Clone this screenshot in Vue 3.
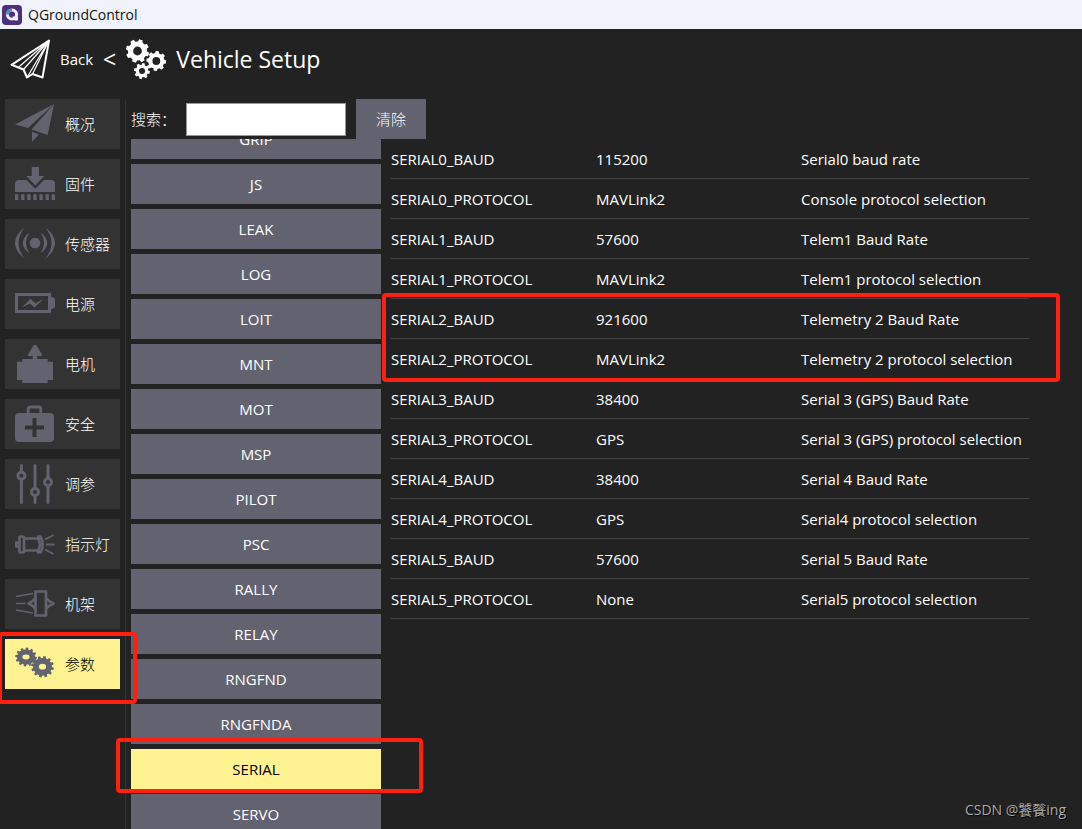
<script setup>
import { ref } from 'vue'

const polar = (cx, cy, rx, ry, a) => `${(cx + rx * Math.cos(a)).toFixed(2)} ${(cy + ry * Math.sin(a)).toFixed(2)}`

// Outline of a gear with a hole, to be filled with the even-odd rule
function gear(cx, cy, rx, ry, teeth, depth, hx, hy, turn = 0) {
  const step = (Math.PI * 2) / teeth
  const points = []
  for (let i = 0; i < teeth; i++) {
    const a = turn + i * step
    points.push(polar(cx, cy, rx - depth, ry - depth, a - step * 0.32))
    points.push(polar(cx, cy, rx, ry, a - step * 0.2))
    points.push(polar(cx, cy, rx, ry, a + step * 0.2))
    points.push(polar(cx, cy, rx - depth, ry - depth, a + step * 0.32))
  }
  const hole = `M${cx - hx} ${cy}a${hx} ${hy} 0 1 0 ${hx * 2} 0a${hx} ${hy} 0 1 0 ${-hx * 2} 0Z`
  return `M${points.join('L')}Z${hole}`
}

const setupGears = [
  gear(11.5, 12, 11.8, 11.8, 8, 2.2, 4.4, 4.4, 0.3),
  gear(30.3, 22, 10, 10, 8, 1.9, 3.9, 3.9, 0.1),
  gear(16, 32, 8, 8, 8, 1.7, 3, 3, 0.2),
]
const paramGears = [
  gear(11, 18, 10.8, 9.4, 12, 1.8, 3.6, 2.4, 0.1),
  gear(27.5, 27.7, 11.4, 10.8, 12, 2, 3.6, 2.9, 0.2),
]

const pages = [
  { id: 'summary', label: '概况' },
  { id: 'firmware', label: '固件' },
  { id: 'sensors', label: '传感器' },
  { id: 'power', label: '电源' },
  { id: 'motors', label: '电机' },
  { id: 'safety', label: '安全' },
  { id: 'tuning', label: '调参' },
  { id: 'lights', label: '指示灯' },
  { id: 'frame', label: '机架' },
  { id: 'params', label: '参数' },
]
const groups = ['GRIP', 'JS', 'LEAK', 'LOG', 'LOIT', 'MNT', 'MOT', 'MSP', 'PILOT', 'PSC', 'RALLY', 'RELAY', 'RNGFND', 'RNGFNDA', 'SERIAL', 'SERVO']
const params = [
  ['SERIAL0_BAUD', '115200', 'Serial0 baud rate'],
  ['SERIAL0_PROTOCOL', 'MAVLink2', 'Console protocol selection'],
  ['SERIAL1_BAUD', '57600', 'Telem1 Baud Rate'],
  ['SERIAL1_PROTOCOL', 'MAVLink2', 'Telem1 protocol selection'],
  ['SERIAL2_BAUD', '921600', 'Telemetry 2 Baud Rate'],
  ['SERIAL2_PROTOCOL', 'MAVLink2', 'Telemetry 2 protocol selection'],
  ['SERIAL3_BAUD', '38400', 'Serial 3 (GPS) Baud Rate'],
  ['SERIAL3_PROTOCOL', 'GPS', 'Serial 3 (GPS) protocol selection'],
  ['SERIAL4_BAUD', '38400', 'Serial 4 Baud Rate'],
  ['SERIAL4_PROTOCOL', 'GPS', 'Serial4 protocol selection'],
  ['SERIAL5_BAUD', '57600', 'Serial 5 Baud Rate'],
  ['SERIAL5_PROTOCOL', 'None', 'Serial5 protocol selection'],
]

const page = ref('params')
const group = ref('SERIAL')
const search = ref('')
</script>

<template>
  <div class="window">
    <div class="titlebar">
      <svg class="logo" viewBox="0 0 20 20" aria-hidden="true">
        <rect width="20" height="20" rx="4" fill="#4d2f7c" />
        <circle cx="10" cy="9.5" r="4.6" fill="none" stroke="#f3eff8" stroke-width="3" />
        <path d="M3.9 9.5A6.1 6.1 0 0 1 10 3.4V6.4A3.1 3.1 0 0 0 6.9 9.5Z" fill="#4a8fc4" />
        <path d="M10.5 11.5h5.5v4h-3.5z" fill="#f3eff8" />
      </svg>
      <span>QGroundControl</span>
    </div>

    <header class="toolbar">
      <button class="back" type="button">
        <svg class="tool-icon" viewBox="0 0 40 40" fill="none" stroke="#fff" stroke-linejoin="round" aria-hidden="true">
          <path d="M39 1.5 1.5 25.8 13.5 30.5 17 38.5 22.5 35 32.5 38.5Z" stroke-width="2" />
          <path d="M39 1.5 13.5 30.5M39 1.5 17 38.5M39 1.5 22.5 35M39 1.5 8.5 28.2" stroke-width="1.2" />
        </svg>
        <span>Back</span>
        <span class="chevron">&lt;</span>
      </button>
      <svg class="tool-icon" viewBox="0 0 40 40" fill="#fff" fill-rule="evenodd" aria-hidden="true">
        <path v-for="d in setupGears" :key="d" :d="d" />
      </svg>
      <h1>Vehicle Setup</h1>
    </header>

    <div class="content">
      <nav class="sidebar">
        <button
          v-for="p in pages"
          :key="p.id"
          type="button"
          class="page-button"
          :class="{ active: page === p.id }"
          @click="page = p.id"
        >
          <svg class="page-icon" viewBox="0 0 40 50" aria-hidden="true">
            <g v-if="p.id === 'summary'" fill="#626270">
              <path d="M0 25.5 39 5 13 29Z" />
              <path d="M16.5 30.5 39 5 32.7 36Z" />
              <path d="M17 32.7 24 35.5 17 42.7Z" />
            </g>
            <g v-else-if="p.id === 'firmware'" fill="#626270">
              <path d="M0 33V25a4 4 0 0 1 4-4H11.5L20.3 29.8 29 21H36a4 4 0 0 1 4 4v8Z" />
              <path d="M16.7 8H24v9h5.3l-9 9.5-9-9.5h5.4Z" />
              <path d="M1.7 35.3v5.7M7.8 35.3v5.7M13.9 35.3v5.7M20 35.3v5.7M26.1 35.3v5.7M32.2 35.3v5.7M38.3 35.3v5.7" stroke="#626270" stroke-width="3.4" />
            </g>
            <g v-else-if="p.id === 'sensors'" fill="#626270">
              <circle cx="20" cy="24" r="5.3" />
              <path d="M14.5 13.5Q1 24 14.5 34.5Q7.5 24 14.5 13.5Z" />
              <path d="M25.5 13.5Q39 24 25.5 34.5Q32.5 24 25.5 13.5Z" />
              <path d="M10 8Q-10 24 10 40Q-3 24 10 8Z" />
              <path d="M30 8Q50 24 30 40Q43 24 30 8Z" />
            </g>
            <g v-else-if="p.id === 'power'" fill="#626270">
              <path d="M0 14H36V34H0ZM3 17V31H33V17Z" fill-rule="evenodd" />
              <path d="M36 17.5 40 19.5V28.5L36 30.5Z" />
              <path d="M7 28.3 15.5 19.7 20.5 24.3 28.5 20 19.5 28.5 15 24.5Z" />
            </g>
            <g v-else-if="p.id === 'motors'" fill="#626270">
              <path d="M18.5 6.5q1.5-1.5 3 0L27 15.5q0 1.5-1 1.5H22.3v3h-4.6v-3H14q-1 0-1-1.5Z" />
              <path d="M7.3 20H32.7v2.7H38V41H32.7v3H7.3v-3H2V22.7h5.3Z" />
            </g>
            <g v-else-if="p.id === 'safety'">
              <rect x="0" y="14" width="39" height="29" rx="4" fill="#626270" />
              <path d="M13.2 15V10a2 2 0 0 1 2-2h8.6a2 2 0 0 1 2 2v5" fill="none" stroke="#626270" stroke-width="2.8" />
              <path d="M19.5 19v19M10 28.5h19" stroke="#333" stroke-width="4" />
            </g>
            <g v-else-if="p.id === 'tuning'" fill="none" stroke="#626270" stroke-width="3" stroke-linecap="round">
              <path d="M6.4 6.5v6.5M6.4 20v23.5M20 6.5V29.5M20 36.5v7M33 6.5v12.5M33 26.5v17" />
              <circle cx="6.4" cy="16.7" r="3.5" />
              <circle cx="20" cy="33" r="3.5" />
              <circle cx="33" cy="23" r="3.5" />
            </g>
            <g v-else-if="p.id === 'lights'" fill="none" stroke="#626270" stroke-width="2.6" stroke-linejoin="round">
              <rect x="4.5" y="17.5" width="4.5" height="16" rx="1" />
              <path d="M4 23.5H1.3v4H4M9 19.5H22.5M9 31.5H22.5M23 17.5h2.5q4.500 8 0 16H23l2-8Z" />
              <path d="M30 20.5 38.5 16M31 25.5h8.5M30 30.500 38.500 35" stroke-width="1.9" />
            </g>
            <g v-else-if="p.id === 'frame'" fill="none" stroke="#626270" stroke-width="2.7" stroke-linejoin="round">
              <rect x="20.5" y="12.5" width="10.5" height="24" />
              <path d="M20 19.5q-2 3-6.5 5 4.500 2 6.500 5M31.500 19.500q2 3 7 5-5 2-7 5" />
              <path d="M1 17.500 18 14.500M1 24.500h9.500M1 31 18 34" stroke-width="1.700" />
            </g>
            <g v-else fill="#626270" fill-rule="evenodd">
              <path v-for="d in paramGears" :key="d" :d="d" />
            </g>
          </svg>
          <span>{{ p.label }}</span>
        </button>
      </nav>

      <main class="editor">
        <form class="search" @submit.prevent>
          <label for="search">搜索：</label>
          <input id="search" v-model="search" type="text" />
          <button type="button" @click="search = ''">清除</button>
        </form>
        <div class="panes">
          <div class="groups">
            <button
              v-for="g in groups"
              :key="g"
              type="button"
              :class="{ active: group === g }"
              @click="group = g"
            >{{ g }}</button>
          </div>
          <div class="table-pane">
            <table>
              <tbody>
                <tr v-for="row in params" :key="row[0]">
                  <td v-for="cell in row" :key="cell">{{ cell }}</td>
                </tr>
              </tbody>
            </table>
          </div>
        </div>
      </main>
    </div>

    <div class="mark mark-page"></div>
    <div class="mark mark-group"></div>
    <div class="mark mark-rows"></div>
    <div class="watermark">CSDN @饕餮ing</div>
  </div>
</template>

<style>
body {
  margin: 0;
  background: #222;
}
</style>

<style scoped>
.window {
  position: relative;
  display: flex;
  flex-direction: column;
  height: 100vh;
  overflow: hidden;
  background: #222;
  color: #fff;
  font: 15px/20px "Open Sans", "Noto Sans CJK SC", sans-serif;
}
button {
  margin: 0;
  padding: 0;
  border: 0;
  background: none;
  color: inherit;
  font: inherit;
  cursor: pointer;
}
.titlebar {
  display: flex;
  align-items: center;
  gap: 6px;
  flex: none;
  height: 29px;
  padding-left: 2px;
  background: #f0f3fb;
  color: #111;
  font-size: 14px;
}
.logo {
  width: 20px;
  height: 20px;
}
.toolbar {
  display: flex;
  align-items: center;
  gap: 10px;
  flex: none;
  height: 60px;
  padding: 0 10px;
}
.back {
  display: flex;
  align-items: center;
  gap: 10px;
}
.chevron {
  font-size: 23px;
}
.tool-icon {
  width: 40px;
  height: 40px;
}
h1 {
  margin: 0;
  font-size: 23px;
  font-weight: 400;
  line-height: 32px;
}
.content {
  display: flex;
  flex: 1;
  min-height: 0;
  padding-top: 10px;
}
.sidebar {
  display: flex;
  flex-direction: column;
  gap: 10px;
  flex: none;
  width: 115px;
  padding: 0 5px;
  border-right: 1px solid #333;
}
.page-button {
  display: flex;
  align-items: center;
  gap: 10px;
  flex: none;
  height: 50px;
  padding-left: 10px;
  background: #333;
  font-weight: 300;
  white-space: nowrap;
}
.page-icon {
  flex: none;
  width: 40px;
  height: 50px;
}
.page-button.active,
.groups .active {
  background: #fff291;
  color: #000;
}
.editor {
  display: flex;
  flex-direction: column;
  flex: 1;
  min-width: 0;
  padding-left: 5px;
}
.search {
  display: flex;
  align-items: center;
  gap: 10px;
  flex: none;
  height: 40px;
  font-weight: 300;
}
.search input {
  box-sizing: border-box;
  width: 160px;
  height: 33px;
  padding: 0 6px;
  border: 1px solid #999;
  border-radius: 0;
  background: #fff;
  font: inherit;
}
.search button {
  width: 70px;
  height: 40px;
  background: #626270;
}
.panes {
  display: flex;
  gap: 10px;
  flex: 1;
  min-height: 0;
  overflow: hidden;
}
.groups {
  display: flex;
  flex-direction: column;
  gap: 5px;
  flex: none;
  width: 250px;
  margin-top: -20px;
}
.groups button {
  flex: none;
  height: 40px;
  background: #626270;
}
.table-pane {
  flex: 1;
  padding-right: 53px;
}
table {
  width: 100%;
  table-layout: fixed;
  border-spacing: 0;
}
td {
  box-sizing: border-box;
  height: 40px;
  padding: 0;
  border-bottom: 1px solid #444;
  white-space: nowrap;
}
td:nth-child(-n + 2) {
  width: 205px;
}
.mark {
  position: absolute;
  box-sizing: border-box;
  border: 4px solid #ff2010;
  border-radius: 4px;
  pointer-events: none;
}
.mark-page {
  left: -2px;
  top: 632px;
  width: 139px;
  height: 72px;
}
.mark-group {
  left: 116px;
  top: 738px;
  width: 307px;
  height: 55px;
}
.mark-rows {
  left: 382px;
  right: 22px;
  top: 293px;
  height: 89px;
}
.watermark {
  position: absolute;
  right: 16px;
  bottom: 9px;
  color: #aaa;
  font-family: "Open Sans", "Noto Sans CJK SC", sans-serif;
  font-size: 14px;
  text-shadow: 1px 1px 1px #000;
}
</style>
